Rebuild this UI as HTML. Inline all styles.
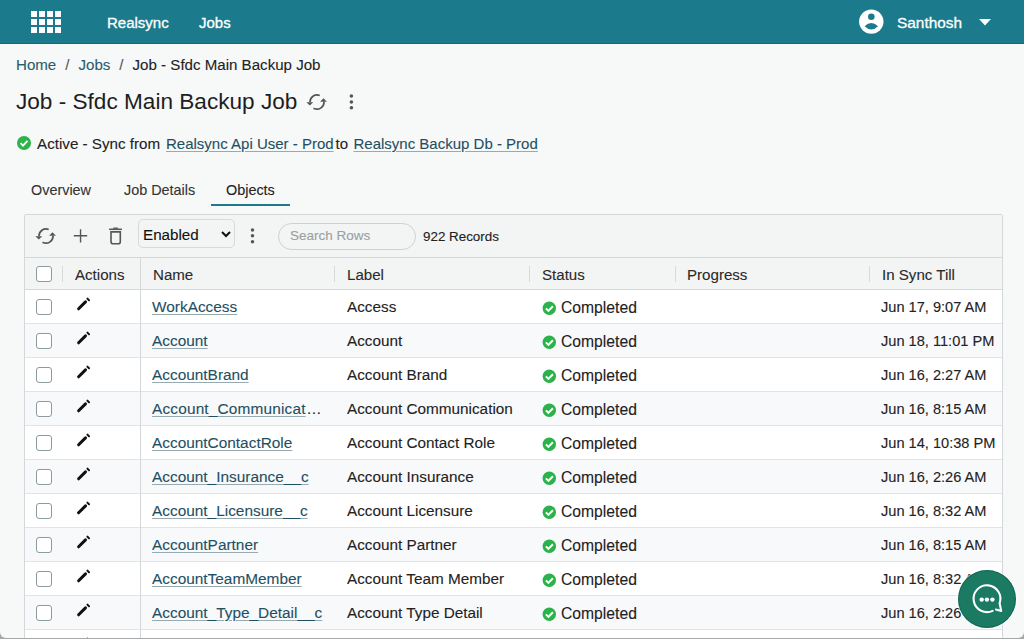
<!DOCTYPE html>
<html><head><meta charset="utf-8"><style>
*{box-sizing:border-box;margin:0;padding:0}
html,body{width:1024px;height:639px;overflow:hidden}
body{background:#a8a8a8;font-family:"Liberation Sans",sans-serif;color:#222;position:relative;-webkit-text-stroke:0.1px currentColor}
.a{position:absolute}
.t{position:absolute;white-space:nowrap;line-height:20px}
.nav{color:#fff;font-size:15px;-webkit-text-stroke:0.3px #fff}
.lnk{color:#1f5062}
.bl{color:#2b5c6d}
.ul{text-decoration:underline;text-decoration-color:#97aab0;text-underline-offset:2px}
.cb{position:absolute;width:16px;height:16px;border:1.4px solid #8b9b9f;border-radius:3px;background:#fff}
.sep{position:absolute;width:1px;height:16px;background:#d6dadc}
.rt{font-size:15.1px}
.hd{font-size:15.1px;color:#2a2a2a}
.hl{position:absolute;height:1px;background:#d3d8db}
.vl{position:absolute;width:1px;background:#d3d8db}
.pen{position:absolute;fill:#111}
</style></head><body>
<div class="a" style="left:0;top:0;width:1024px;height:638px;overflow:hidden;border-radius:0 0 6px 6px;background:#f7f8f8">
<div class="a" style="left:0;top:0;width:1024px;height:44px;background:#1b7b8c;border-bottom:1px solid #0f6a7a"></div>
<svg class="a" style="left:31px;top:11px" width="30" height="22" viewBox="0 0 30 22"><g fill="#fff"><rect x="0" y="0" width="6" height="6"/><rect x="8" y="0" width="6" height="6"/><rect x="16" y="0" width="6" height="6"/><rect x="24" y="0" width="6" height="6"/><rect x="0" y="8" width="6" height="6"/><rect x="8" y="8" width="6" height="6"/><rect x="16" y="8" width="6" height="6"/><rect x="24" y="8" width="6" height="6"/><rect x="0" y="16" width="6" height="6"/><rect x="8" y="16" width="6" height="6"/><rect x="16" y="16" width="6" height="6"/><rect x="24" y="16" width="6" height="6"/></g></svg>
<div class="t nav" style="left:107px;top:13px">Realsync</div>
<div class="t nav" style="left:199px;top:13px">Jobs</div>
<svg class="a" style="left:859px;top:9px" width="25" height="25" viewBox="0 0 25 25"><circle cx="12.3" cy="12.6" r="12.2" fill="#fff"/><circle cx="12.3" cy="7.8" r="3.3" fill="#1b7b8c"/><path d="M5.6 17.2Q12.3 10.6 19 17.2Q12.3 23.8 5.6 17.2Z" fill="#1b7b8c"/></svg>
<div class="t nav" style="left:897px;top:13px;font-size:15.4px">Santhosh</div>
<svg class="a" style="left:979px;top:19px" width="12" height="7" viewBox="0 0 12 7"><path d="M0 0H12L6 6.5Z" fill="#fff"/></svg>
<div class="t" style="left:16px;top:55px;font-size:15.1px"><span class="bl">Home</span><span style="color:#555;padding:0 9px">/</span><span class="bl">Jobs</span><span style="color:#555;padding:0 9px">/</span><span style="color:#222">Job - Sfdc Main Backup Job</span></div>
<div class="t" style="left:16px;top:89px;font-size:22.6px;line-height:26px;color:#1e1e1e;-webkit-text-stroke:0">Job - Sfdc Main Backup Job</div>
<svg class="a" style="left:306px;top:94px" width="22" height="17" viewBox="0 0 22 17"><g fill="none" stroke="#555" stroke-width="1.7"><path d="M13.73 1.56A7 7 0 0 0 4 8.3"/><path d="M7.5 14.2A7 7 0 0 0 18 7.7"/></g><path d="M0.4 8.2L7.2 8.2L3.8 11.6Z" fill="#555"/><path d="M14.1 7.8L20.9 7.8L17.5 4.2Z" fill="#555"/></svg>
<svg class="a" style="left:348px;top:93px" width="7" height="18" viewBox="0 0 7 18"><g fill="#555"><circle cx="3.4" cy="3" r="1.8"/><circle cx="3.4" cy="9" r="1.8"/><circle cx="3.4" cy="14.7" r="1.8"/></g></svg>
<svg class="a" style="left:17px;top:136px" width="14" height="14" viewBox="0 0 14 14"><circle cx="7" cy="7" r="7" fill="#2db34a"/><path d="M3.6 7.2L6 9.6L10.5 4.9" fill="none" stroke="#fff" stroke-width="1.9"/></svg>
<div class="t" style="left:37px;top:134px;font-size:15.2px;color:#222">Active - Sync from</div>
<div class="t lnk ul" style="left:166px;top:134px;font-size:15px">Realsync Api User - Prod</div>
<div class="t" style="left:335.5px;top:134px;font-size:15px;color:#222">to</div>
<div class="t lnk ul" style="left:353.5px;top:134px;font-size:15px">Realsync Backup Db - Prod</div>
<div class="t" style="left:31px;top:180px;font-size:14.4px;color:#333">Overview</div>
<div class="t" style="left:124px;top:180px;font-size:14.4px;color:#333">Job Details</div>
<div class="t" style="left:226px;top:180px;font-size:14.4px;color:#222">Objects</div>
<div class="a" style="left:211px;top:204px;width:79px;height:2px;background:#1f7a8c"></div>
<div class="a" style="left:24px;top:214px;width:979px;height:425px;background:#fff;border:1px solid #d3d8db;border-radius:2px 2px 0 0"></div>
<div class="a" style="left:25px;top:215px;width:977px;height:74px;background:#f3f4f4"></div>
<div class="hl" style="left:25px;top:257px;width:977px"></div>
<div class="hl" style="left:25px;top:289px;width:977px"></div>
<svg class="a" style="left:35px;top:228px" width="22" height="17" viewBox="0 0 22 17"><g fill="none" stroke="#555" stroke-width="1.7"><path d="M13.73 1.56A7 7 0 0 0 4 8.3"/><path d="M7.5 14.2A7 7 0 0 0 18 7.7"/></g><path d="M0.4 8.2L7.2 8.2L3.8 11.6Z" fill="#555"/><path d="M14.1 7.8L20.9 7.8L17.5 4.2Z" fill="#555"/></svg>
<svg class="a" style="left:73px;top:229px" width="15" height="15" viewBox="0 0 15 15"><path d="M7.55 0.2V13.6M0.8 6.75H14.2" stroke="#555" stroke-width="1.4"/></svg>
<svg class="a" style="left:108px;top:226px" width="15" height="20" viewBox="0 0 15 20"><path d="M1.1 3.3H13.9" stroke="#555" stroke-width="1.5"/><path d="M4.6 2.7L5.6 1.5H9.6L10.6 2.7Z" fill="#555"/><path d="M3 5.9H12.3V15.7Q12.3 17.7 10.3 17.7H5Q3 17.7 3 15.7Z" fill="none" stroke="#555" stroke-width="1.6"/></svg>
<div class="a" style="left:138px;top:219px;width:97px;height:29px;border:1px solid #d6dadb;border-radius:5px;background:#f3f4f4"></div>
<div class="t" style="left:143px;top:225px;font-size:15.2px;color:#111">Enabled</div>
<svg class="a" style="left:221px;top:231px" width="10" height="7" viewBox="0 0 10 7"><path d="M1 1L5 5L9 1" fill="none" stroke="#111" stroke-width="2"/></svg>
<svg class="a" style="left:250px;top:228px" width="6" height="16" viewBox="0 0 6 16"><g fill="#555"><circle cx="2.5" cy="2" r="1.75"/><circle cx="2.5" cy="7.85" r="1.75"/><circle cx="2.5" cy="13.7" r="1.75"/></g></svg>
<div class="a" style="left:278px;top:223px;width:138px;height:27px;border:1px solid #cdd1d2;border-radius:14px;background:#f3f4f4"></div>
<div class="t" style="left:290px;top:226px;font-size:13.5px;color:#9aa0a2">Search Rows</div>
<div class="t" style="left:423px;top:227px;font-size:13.4px;color:#222">922 Records</div>
<div class="cb" style="left:36px;top:266px"></div>
<div class="sep" style="left:62px;top:266px"></div>
<div class="t hd" style="left:75px;top:265px">Actions</div>
<div class="t hd" style="left:153px;top:265px">Name</div>
<div class="sep" style="left:334px;top:266px"></div>
<div class="t hd" style="left:347px;top:265px">Label</div>
<div class="sep" style="left:529px;top:266px"></div>
<div class="t hd" style="left:542px;top:265px">Status</div>
<div class="sep" style="left:675px;top:266px"></div>
<div class="t hd" style="left:687px;top:265px">Progress</div>
<div class="sep" style="left:869px;top:266px"></div>
<div class="t hd" style="left:882px;top:265px">In Sync Till</div>
<div class="a" style="left:25px;top:290px;width:977px;height:33px;background:#fff"></div>
<div class="hl" style="left:25px;top:323px;width:977px;background:#e1e4e6"></div>
<div class="cb" style="left:36px;top:299px"></div>
<svg class="a" style="left:74px;top:294px" width="20" height="20" viewBox="0 0 20 20"><path d="M4.6 14.8L11.5 7.9" stroke="#111" stroke-width="3" stroke-linecap="round"/><path d="M13.4 4.6L15 6.2" stroke="#111" stroke-width="2" stroke-linecap="round"/></svg>
<div class="t rt lnk ul" style="left:152px;top:297px;font-size:15.4px">WorkAccess</div>
<div class="t rt" style="left:347px;top:297px;font-size:15.3px">Access</div>
<svg class="a" style="left:542px;top:301px" width="15" height="15" viewBox="0 0 15 15"><circle cx="7.3" cy="7.2" r="6.7" fill="#2bb24a"/><path d="M3.9 7.4L6.4 9.9L10.9 5.2" fill="none" stroke="#fff" stroke-width="2"/></svg>
<div class="t rt" style="left:561px;top:298px;font-size:15.7px">Completed</div>
<div class="t rt" style="left:881px;top:297px;font-size:14.6px">Jun 17, 9:07 AM</div>
<div class="a" style="left:25px;top:324px;width:977px;height:33px;background:#f8f9fb"></div>
<div class="hl" style="left:25px;top:357px;width:977px;background:#e1e4e6"></div>
<div class="cb" style="left:36px;top:333px"></div>
<svg class="a" style="left:74px;top:328px" width="20" height="20" viewBox="0 0 20 20"><path d="M4.6 14.8L11.5 7.9" stroke="#111" stroke-width="3" stroke-linecap="round"/><path d="M13.4 4.6L15 6.2" stroke="#111" stroke-width="2" stroke-linecap="round"/></svg>
<div class="t rt lnk ul" style="left:152px;top:331px;font-size:15.4px">Account</div>
<div class="t rt" style="left:347px;top:331px;font-size:15.3px">Account</div>
<svg class="a" style="left:542px;top:335px" width="15" height="15" viewBox="0 0 15 15"><circle cx="7.3" cy="7.2" r="6.7" fill="#2bb24a"/><path d="M3.9 7.4L6.4 9.9L10.9 5.2" fill="none" stroke="#fff" stroke-width="2"/></svg>
<div class="t rt" style="left:561px;top:332px;font-size:15.7px">Completed</div>
<div class="t rt" style="left:881px;top:331px;font-size:14.6px">Jun 18, 11:01 PM</div>
<div class="a" style="left:25px;top:358px;width:977px;height:33px;background:#fff"></div>
<div class="hl" style="left:25px;top:391px;width:977px;background:#e1e4e6"></div>
<div class="cb" style="left:36px;top:367px"></div>
<svg class="a" style="left:74px;top:362px" width="20" height="20" viewBox="0 0 20 20"><path d="M4.6 14.8L11.5 7.9" stroke="#111" stroke-width="3" stroke-linecap="round"/><path d="M13.4 4.6L15 6.2" stroke="#111" stroke-width="2" stroke-linecap="round"/></svg>
<div class="t rt lnk ul" style="left:152px;top:365px;font-size:15.4px">AccountBrand</div>
<div class="t rt" style="left:347px;top:365px;font-size:15.3px">Account Brand</div>
<svg class="a" style="left:542px;top:369px" width="15" height="15" viewBox="0 0 15 15"><circle cx="7.3" cy="7.2" r="6.7" fill="#2bb24a"/><path d="M3.9 7.4L6.4 9.9L10.9 5.2" fill="none" stroke="#fff" stroke-width="2"/></svg>
<div class="t rt" style="left:561px;top:366px;font-size:15.7px">Completed</div>
<div class="t rt" style="left:881px;top:365px;font-size:14.6px">Jun 16, 2:27 AM</div>
<div class="a" style="left:25px;top:392px;width:977px;height:33px;background:#f8f9fb"></div>
<div class="hl" style="left:25px;top:425px;width:977px;background:#e1e4e6"></div>
<div class="cb" style="left:36px;top:401px"></div>
<svg class="a" style="left:74px;top:396px" width="20" height="20" viewBox="0 0 20 20"><path d="M4.6 14.8L11.5 7.9" stroke="#111" stroke-width="3" stroke-linecap="round"/><path d="M13.4 4.6L15 6.2" stroke="#111" stroke-width="2" stroke-linecap="round"/></svg>
<div class="t rt lnk ul" style="left:152px;top:399px;font-size:15.4px;letter-spacing:0.17px">Account_Communicat<span style="text-decoration:none;display:inline-block;margin-left:0.5px;color:#222;letter-spacing:0">…</span></div>
<div class="t rt" style="left:347px;top:399px;font-size:15.3px">Account Communication</div>
<svg class="a" style="left:542px;top:403px" width="15" height="15" viewBox="0 0 15 15"><circle cx="7.3" cy="7.2" r="6.7" fill="#2bb24a"/><path d="M3.9 7.4L6.4 9.9L10.9 5.2" fill="none" stroke="#fff" stroke-width="2"/></svg>
<div class="t rt" style="left:561px;top:400px;font-size:15.7px">Completed</div>
<div class="t rt" style="left:881px;top:399px;font-size:14.6px">Jun 16, 8:15 AM</div>
<div class="a" style="left:25px;top:426px;width:977px;height:33px;background:#fff"></div>
<div class="hl" style="left:25px;top:459px;width:977px;background:#e1e4e6"></div>
<div class="cb" style="left:36px;top:435px"></div>
<svg class="a" style="left:74px;top:430px" width="20" height="20" viewBox="0 0 20 20"><path d="M4.6 14.8L11.5 7.9" stroke="#111" stroke-width="3" stroke-linecap="round"/><path d="M13.4 4.6L15 6.2" stroke="#111" stroke-width="2" stroke-linecap="round"/></svg>
<div class="t rt lnk ul" style="left:152px;top:433px;font-size:15.4px">AccountContactRole</div>
<div class="t rt" style="left:347px;top:433px;font-size:15.3px">Account Contact Role</div>
<svg class="a" style="left:542px;top:437px" width="15" height="15" viewBox="0 0 15 15"><circle cx="7.3" cy="7.2" r="6.7" fill="#2bb24a"/><path d="M3.9 7.4L6.4 9.9L10.9 5.2" fill="none" stroke="#fff" stroke-width="2"/></svg>
<div class="t rt" style="left:561px;top:434px;font-size:15.7px">Completed</div>
<div class="t rt" style="left:881px;top:433px;font-size:14.6px">Jun 14, 10:38 PM</div>
<div class="a" style="left:25px;top:460px;width:977px;height:33px;background:#f8f9fb"></div>
<div class="hl" style="left:25px;top:493px;width:977px;background:#e1e4e6"></div>
<div class="cb" style="left:36px;top:469px"></div>
<svg class="a" style="left:74px;top:464px" width="20" height="20" viewBox="0 0 20 20"><path d="M4.6 14.8L11.5 7.9" stroke="#111" stroke-width="3" stroke-linecap="round"/><path d="M13.4 4.6L15 6.2" stroke="#111" stroke-width="2" stroke-linecap="round"/></svg>
<div class="t rt lnk ul" style="left:152px;top:467px;font-size:15.4px">Account_Insurance__c</div>
<div class="t rt" style="left:347px;top:467px;font-size:15.3px">Account Insurance</div>
<svg class="a" style="left:542px;top:471px" width="15" height="15" viewBox="0 0 15 15"><circle cx="7.3" cy="7.2" r="6.7" fill="#2bb24a"/><path d="M3.9 7.4L6.4 9.9L10.9 5.2" fill="none" stroke="#fff" stroke-width="2"/></svg>
<div class="t rt" style="left:561px;top:468px;font-size:15.7px">Completed</div>
<div class="t rt" style="left:881px;top:467px;font-size:14.6px">Jun 16, 2:26 AM</div>
<div class="a" style="left:25px;top:494px;width:977px;height:33px;background:#fff"></div>
<div class="hl" style="left:25px;top:527px;width:977px;background:#e1e4e6"></div>
<div class="cb" style="left:36px;top:503px"></div>
<svg class="a" style="left:74px;top:498px" width="20" height="20" viewBox="0 0 20 20"><path d="M4.6 14.8L11.5 7.9" stroke="#111" stroke-width="3" stroke-linecap="round"/><path d="M13.4 4.6L15 6.2" stroke="#111" stroke-width="2" stroke-linecap="round"/></svg>
<div class="t rt lnk ul" style="left:152px;top:501px;font-size:15.4px">Account_Licensure__c</div>
<div class="t rt" style="left:347px;top:501px;font-size:15.3px">Account Licensure</div>
<svg class="a" style="left:542px;top:505px" width="15" height="15" viewBox="0 0 15 15"><circle cx="7.3" cy="7.2" r="6.7" fill="#2bb24a"/><path d="M3.9 7.4L6.4 9.9L10.9 5.2" fill="none" stroke="#fff" stroke-width="2"/></svg>
<div class="t rt" style="left:561px;top:502px;font-size:15.7px">Completed</div>
<div class="t rt" style="left:881px;top:501px;font-size:14.6px">Jun 16, 8:32 AM</div>
<div class="a" style="left:25px;top:528px;width:977px;height:33px;background:#f8f9fb"></div>
<div class="hl" style="left:25px;top:561px;width:977px;background:#e1e4e6"></div>
<div class="cb" style="left:36px;top:537px"></div>
<svg class="a" style="left:74px;top:532px" width="20" height="20" viewBox="0 0 20 20"><path d="M4.6 14.8L11.5 7.9" stroke="#111" stroke-width="3" stroke-linecap="round"/><path d="M13.4 4.6L15 6.2" stroke="#111" stroke-width="2" stroke-linecap="round"/></svg>
<div class="t rt lnk ul" style="left:152px;top:535px;font-size:15.4px">AccountPartner</div>
<div class="t rt" style="left:347px;top:535px;font-size:15.3px">Account Partner</div>
<svg class="a" style="left:542px;top:539px" width="15" height="15" viewBox="0 0 15 15"><circle cx="7.3" cy="7.2" r="6.7" fill="#2bb24a"/><path d="M3.9 7.4L6.4 9.9L10.9 5.2" fill="none" stroke="#fff" stroke-width="2"/></svg>
<div class="t rt" style="left:561px;top:536px;font-size:15.7px">Completed</div>
<div class="t rt" style="left:881px;top:535px;font-size:14.6px">Jun 16, 8:15 AM</div>
<div class="a" style="left:25px;top:562px;width:977px;height:33px;background:#fff"></div>
<div class="hl" style="left:25px;top:595px;width:977px;background:#e1e4e6"></div>
<div class="cb" style="left:36px;top:571px"></div>
<svg class="a" style="left:74px;top:566px" width="20" height="20" viewBox="0 0 20 20"><path d="M4.6 14.8L11.5 7.9" stroke="#111" stroke-width="3" stroke-linecap="round"/><path d="M13.4 4.6L15 6.2" stroke="#111" stroke-width="2" stroke-linecap="round"/></svg>
<div class="t rt lnk ul" style="left:152px;top:569px;font-size:15.4px">AccountTeamMember</div>
<div class="t rt" style="left:347px;top:569px;font-size:15.3px">Account Team Member</div>
<svg class="a" style="left:542px;top:573px" width="15" height="15" viewBox="0 0 15 15"><circle cx="7.3" cy="7.2" r="6.7" fill="#2bb24a"/><path d="M3.9 7.4L6.4 9.9L10.9 5.2" fill="none" stroke="#fff" stroke-width="2"/></svg>
<div class="t rt" style="left:561px;top:570px;font-size:15.7px">Completed</div>
<div class="t rt" style="left:881px;top:569px;font-size:14.6px">Jun 16, 8:32 AM</div>
<div class="a" style="left:25px;top:596px;width:977px;height:33px;background:#f8f9fb"></div>
<div class="hl" style="left:25px;top:629px;width:977px;background:#e1e4e6"></div>
<div class="cb" style="left:36px;top:605px"></div>
<svg class="a" style="left:74px;top:600px" width="20" height="20" viewBox="0 0 20 20"><path d="M4.6 14.8L11.5 7.9" stroke="#111" stroke-width="3" stroke-linecap="round"/><path d="M13.4 4.6L15 6.2" stroke="#111" stroke-width="2" stroke-linecap="round"/></svg>
<div class="t rt lnk ul" style="left:152px;top:603px;font-size:15.4px">Account_Type_Detail__c</div>
<div class="t rt" style="left:347px;top:603px;font-size:15.3px">Account Type Detail</div>
<svg class="a" style="left:542px;top:607px" width="15" height="15" viewBox="0 0 15 15"><circle cx="7.3" cy="7.2" r="6.7" fill="#2bb24a"/><path d="M3.9 7.4L6.4 9.9L10.9 5.2" fill="none" stroke="#fff" stroke-width="2"/></svg>
<div class="t rt" style="left:561px;top:604px;font-size:15.7px">Completed</div>
<div class="t rt" style="left:881px;top:603px;font-size:14.6px">Jun 16, 2:26 AM</div>
<div class="a" style="left:25px;top:630px;width:977px;height:33px;background:#fff"></div>
<div class="hl" style="left:25px;top:663px;width:977px;background:#e1e4e6"></div>
<div class="cb" style="left:36px;top:639px"></div>
<svg class="a" style="left:74px;top:634px" width="20" height="20" viewBox="0 0 20 20"><path d="M4.6 14.8L11.5 7.9" stroke="#111" stroke-width="3" stroke-linecap="round"/><path d="M13.4 4.6L15 6.2" stroke="#111" stroke-width="2" stroke-linecap="round"/></svg>
<div class="t rt lnk ul" style="left:152px;top:637px;font-size:15.4px">Account_X</div>
<div class="t rt" style="left:347px;top:637px;font-size:15.3px">Account X</div>
<svg class="a" style="left:542px;top:641px" width="15" height="15" viewBox="0 0 15 15"><circle cx="7.3" cy="7.2" r="6.7" fill="#2bb24a"/><path d="M3.9 7.4L6.4 9.9L10.9 5.2" fill="none" stroke="#fff" stroke-width="2"/></svg>
<div class="t rt" style="left:561px;top:638px;font-size:15.7px">Completed</div>
<div class="t rt" style="left:881px;top:637px;font-size:14.6px">Jun 16, 2:26 AM</div>
<div class="vl" style="left:140px;top:258px;height:382px"></div>
<div class="a" style="left:958px;top:570px;width:58px;height:58px;border-radius:50%;background:#1b7a62;box-shadow:inset 0 0 0 1px rgba(0,70,50,.35),0 0 0 1px rgba(255,255,255,.6)"></div>
<svg class="a" style="left:970px;top:582px" width="34" height="34" viewBox="0 0 34 34"><path d="M22.66 28.84A13.4 13.4 0 1 1 29.59 21.28L31.2 28.9L26 27.6" fill="none" stroke="#fff" stroke-width="2.1" stroke-linecap="round" stroke-linejoin="round"/><g fill="#fff"><circle cx="11.7" cy="17.6" r="2.2"/><circle cx="16.9" cy="17.6" r="2.2"/><circle cx="22.4" cy="17.6" r="2.2"/></g></svg>
</div></body></html>
